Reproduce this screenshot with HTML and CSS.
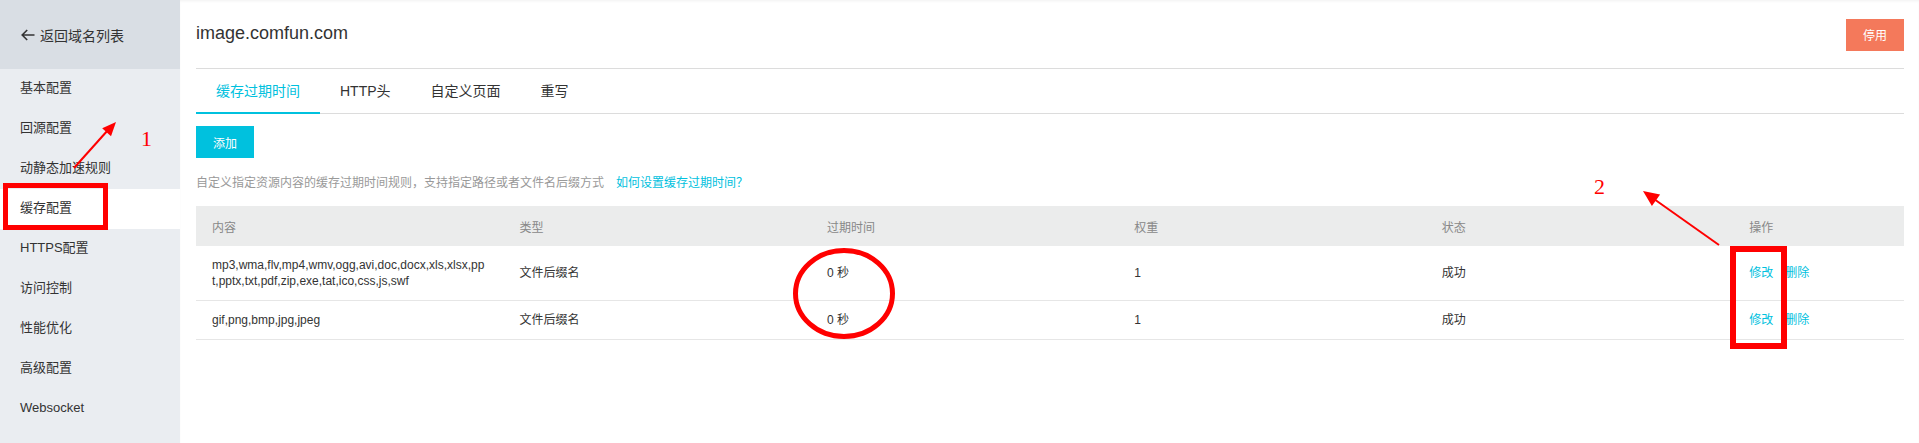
FILE: index.html
```html
<!DOCTYPE html>
<html lang="zh-CN">
<head>
<meta charset="utf-8">
<title>缓存配置</title>
<link rel="stylesheet" href="styles.css">
</head>
<body>
<div class="page">
  <aside class="sidebar">
    <div class="back">
      <svg class="back-icon" width="14" height="12" viewBox="0 0 14 12" aria-hidden="true"><path d="M13.5 6H1.2M6.2 1L1.2 6l5 5" fill="none" stroke="#333" stroke-width="1.6"/></svg>
      <span>返回域名列表</span>
    </div>
    <ul class="nav">
      <li class="nav-item">基本配置</li>
      <li class="nav-item">回源配置</li>
      <li class="nav-item">动静态加速规则</li>
      <li class="nav-item active">缓存配置</li>
      <li class="nav-item">HTTPS配置</li>
      <li class="nav-item">访问控制</li>
      <li class="nav-item">性能优化</li>
      <li class="nav-item">高级配置</li>
      <li class="nav-item">Websocket</li>
    </ul>
  </aside>
  <main class="main">
    <header class="head">
      <h1 class="title">image.comfun.com</h1>
      <button class="btn btn-stop">停用</button>
    </header>
    <nav class="tabs">
      <span class="tab active">缓存过期时间</span>
      <span class="tab">HTTP头</span>
      <span class="tab">自定义页面</span>
      <span class="tab">重写</span>
    </nav>
    <div class="toolbar"><button class="btn btn-add">添加</button></div>
    <p class="desc">自定义指定资源内容的缓存过期时间规则，支持指定路径或者文件名后缀方式<a class="link help">如何设置缓存过期时间？</a></p>
    <table class="grid">
      <colgroup><col class="c18"><col class="c18"><col class="c18"><col class="c18"><col class="c18"><col class="c10"></colgroup>
      <thead>
        <tr><th>内容</th><th>类型</th><th>过期时间</th><th>权重</th><th>状态</th><th>操作</th></tr>
      </thead>
      <tbody>
        <tr>
          <td class="content">mp3,wma,flv,mp4,wmv,ogg,avi,doc,docx,xls,xlsx,ppt,pptx,txt,pdf,zip,exe,tat,ico,css,js,swf</td>
          <td>文件后缀名</td><td>0 秒</td><td>1</td><td>成功</td>
          <td class="ops"><a class="link">修改</a><a class="link">删除</a></td>
        </tr>
        <tr>
          <td class="content">gif,png,bmp,jpg,jpeg</td>
          <td>文件后缀名</td><td>0 秒</td><td>1</td><td>成功</td>
          <td class="ops"><a class="link">修改</a><a class="link">删除</a></td>
        </tr>
      </tbody>
    </table>
  </main>
  <svg class="annot" width="1919" height="443" viewBox="0 0 1919 443" aria-hidden="true">
    <rect x="5.5" y="185.5" width="100" height="42" fill="none" stroke="#ff0000" stroke-width="5"/>
    <line x1="74" y1="168" x2="108" y2="130" stroke="#ff0000" stroke-width="2"/>
    <polygon points="116,122 111,136.3 102.2,128.3" fill="#ff0000"/>
    <text x="141" y="146" class="num">1</text>
    <ellipse cx="844" cy="293.5" rx="48.5" ry="43" fill="none" stroke="#ff0000" stroke-width="5"/>
    <text x="1594" y="194" class="num">2</text>
    <line x1="1719" y1="245" x2="1654" y2="199" stroke="#ff0000" stroke-width="2"/>
    <polygon points="1643,191 1660.1,194.6 1651.9,206" fill="#ff0000"/>
    <rect x="1733" y="249" width="51" height="97" fill="none" stroke="#ff0000" stroke-width="6"/>
  </svg>
</div>
</body>
</html>
```
FILE: styles.css
```css
* { box-sizing: border-box; }
html, body { margin: 0; padding: 0; }
body {
  font-family: "Liberation Sans", Arial, "Noto Sans CJK SC", sans-serif;
  font-size: 12px;
  color: #333;
  background: #fff;
}
.page {
  position: relative;
  display: flex;
  width: 1919px;
  height: 443px;
  overflow: hidden;
}
.sidebar {
  width: 180px;
  flex: 0 0 180px;
  background: #eaedf1;
}
.back {
  height: 69px;
  background: #d9dee4;
  display: flex;
  align-items: center;
  padding-left: 21px;
  font-size: 14px;
  color: #333;
}
.back-icon { margin-right: 5px; margin-top: 1px; }
.nav { list-style: none; margin: 0; padding: 0; }
.nav-item {
  height: 40px;
  line-height: 38px;
  padding-left: 20px;
  font-size: 13px;
  color: #333;
}
.nav-item.active { background: #fff; }
.main {
  flex: 1;
  padding: 0 15px 0 16px;
  box-shadow: inset 0 2px 3px -1px rgba(0,0,0,0.06);
}
.head {
  height: 69px;
  display: flex;
  align-items: center;
  justify-content: space-between;
  border-bottom: 1px solid #dcdcdc;
  padding-bottom: 1px;
}
.title {
  margin: 0;
  font-size: 18px;
  font-weight: normal;
  color: #333;
}
.btn {
  border: 0;
  height: 32px;
  padding: 0 17px;
  font-family: inherit;
  font-size: 12px;
  color: #fff;
  cursor: pointer;
}
.btn-stop { background: #f4795b; margin-top: 2px; }
.btn-add { background: #00c1de; }
.tabs {
  display: flex;
  height: 45px;
  border-bottom: 1px solid #dcdcdc;
}
.tab {
  padding: 0 20px;
  font-size: 14px;
  line-height: 44px;
  color: #333;
  margin-bottom: -1px;
}
.tab.active {
  color: #00c1de;
  border-bottom: 2px solid #00c1de;
}
.toolbar { margin-top: 12px; display: flex; }
.desc {
  margin: 16px 0 0;
  line-height: 18px;
  color: #999;
}
.link { color: #00c1de; text-decoration: none; cursor: pointer; }
.help { margin-left: 12px; }
.grid {
  margin-top: 14px;
  width: 100%;
  table-layout: fixed;
  border-collapse: collapse;
}
.c18 { width: 18%; }
.c10 { width: 10%; }
.grid th {
  height: 40px;
  padding: 0 16px;
  background: #ebecec;
  text-align: left;
  font-weight: normal;
  color: #888;
}
.grid td {
  padding: 11px 16px;
  line-height: 16px;
  border-bottom: 1px solid #e6e6e6;
  color: #333;
  vertical-align: middle;
}
.grid td.content { word-break: break-all; }
.ops .link + .link { margin-left: 12px; }
.annot {
  position: absolute;
  left: 0;
  top: 0;
  pointer-events: none;
}
.num {
  font-family: "Liberation Serif", "Times New Roman", serif;
  font-size: 22px;
  fill: #ff0000;
}
```
